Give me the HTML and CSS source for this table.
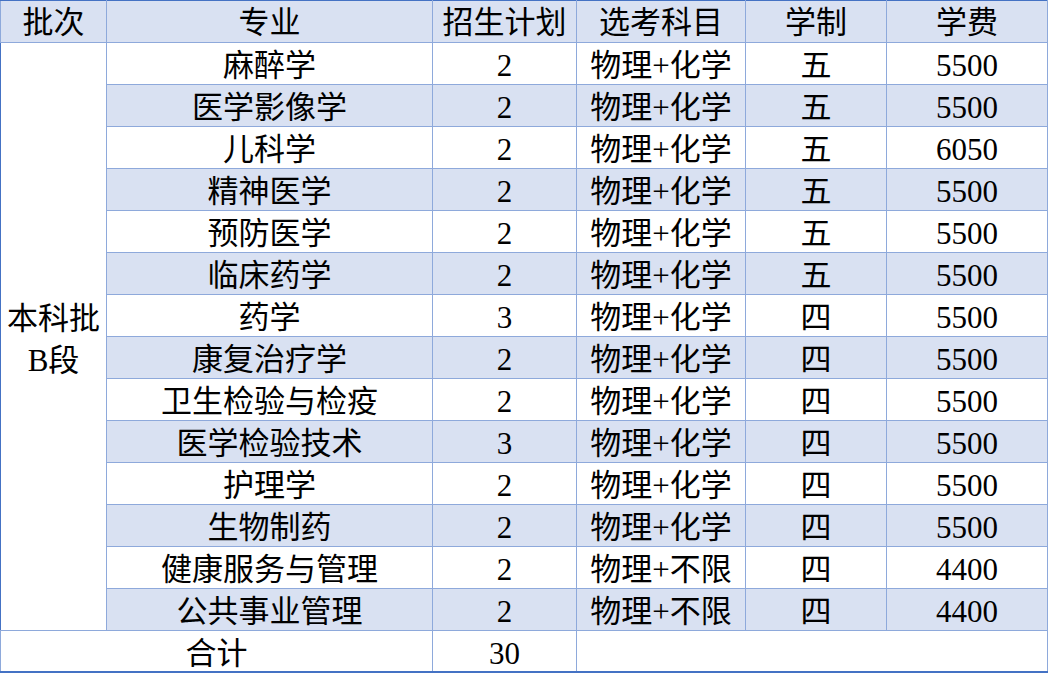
FILE: index.html
```html
<!DOCTYPE html>
<html lang="zh-CN">
<head>
<meta charset="utf-8">
<title>招生计划</title>
<link rel="stylesheet" href="styles.css">
</head>
<body>
<table class="plan">
  <colgroup>
    <col class="c-batch">
    <col class="c-major">
    <col class="c-num">
    <col class="c-subj">
    <col class="c-len">
    <col class="c-fee">
  </colgroup>
  <thead>
    <tr class="head">
      <th>批次</th><th>专业</th><th>招生计划</th><th>选考科目</th><th>学制</th><th>学费</th>
    </tr>
  </thead>
  <tbody>
    <tr><td class="batch" rowspan="14">本科批<br>B段</td><td>麻醉学</td><td>2</td><td>物理+化学</td><td>五</td><td>5500</td></tr>
    <tr class="alt"><td>医学影像学</td><td>2</td><td>物理+化学</td><td>五</td><td>5500</td></tr>
    <tr><td>儿科学</td><td>2</td><td>物理+化学</td><td>五</td><td>6050</td></tr>
    <tr class="alt"><td>精神医学</td><td>2</td><td>物理+化学</td><td>五</td><td>5500</td></tr>
    <tr><td>预防医学</td><td>2</td><td>物理+化学</td><td>五</td><td>5500</td></tr>
    <tr class="alt"><td>临床药学</td><td>2</td><td>物理+化学</td><td>五</td><td>5500</td></tr>
    <tr><td>药学</td><td>3</td><td>物理+化学</td><td>四</td><td>5500</td></tr>
    <tr class="alt"><td>康复治疗学</td><td>2</td><td>物理+化学</td><td>四</td><td>5500</td></tr>
    <tr><td>卫生检验与检疫</td><td>2</td><td>物理+化学</td><td>四</td><td>5500</td></tr>
    <tr class="alt"><td>医学检验技术</td><td>3</td><td>物理+化学</td><td>四</td><td>5500</td></tr>
    <tr><td>护理学</td><td>2</td><td>物理+化学</td><td>四</td><td>5500</td></tr>
    <tr class="alt"><td>生物制药</td><td>2</td><td>物理+化学</td><td>四</td><td>5500</td></tr>
    <tr><td>健康服务与管理</td><td>2</td><td>物理+不限</td><td>四</td><td>4400</td></tr>
    <tr class="alt"><td>公共事业管理</td><td>2</td><td>物理+不限</td><td>四</td><td>4400</td></tr>
  </tbody>
  <tfoot>
    <tr class="total"><td colspan="2">合计</td><td>30</td><td colspan="3"></td></tr>
  </tfoot>
</table>
</body>
</html>
```
FILE: styles.css
```css
html, body {
  margin: 0;
  padding: 0;
  background: #ffffff;
}

.plan {
  border-collapse: collapse;
  table-layout: fixed;
  width: 1047px;
  font-family: "Liberation Serif", "Noto Sans CJK SC", serif;
  font-size: 31px;
  color: #000000;
  border: 1px solid #4472c4;
}

.c-batch { width: 106px; }
.c-major { width: 326px; }
.c-num { width: 144px; }
.c-subj { width: 169px; }
.c-len { width: 141px; }
.c-fee { width: 161px; }

.plan th,
.plan td {
  border: 1px solid #8ea9db;
  padding: 4px 0 0 0;
  height: 37px;
  line-height: 34px;
  text-align: center;
  vertical-align: middle;
  font-weight: normal;
  white-space: nowrap;
  overflow: hidden;
}

.plan .head th {
  background: #d9e1f2;
  border-top: 1px solid #4472c4;
  padding-top: 2px;
  height: 39px;
}

.plan .alt td {
  background: #d9e1f2;
}

.plan .batch {
  background: #ffffff;
  line-height: 42px;
  padding-top: 6px;
  border-left: 1px solid #4472c4;
}

.plan .total td {
  height: 33px;
  padding-top: 6px;
  background: #ffffff;
  border-bottom: 2px solid #4472c4;
}
```
